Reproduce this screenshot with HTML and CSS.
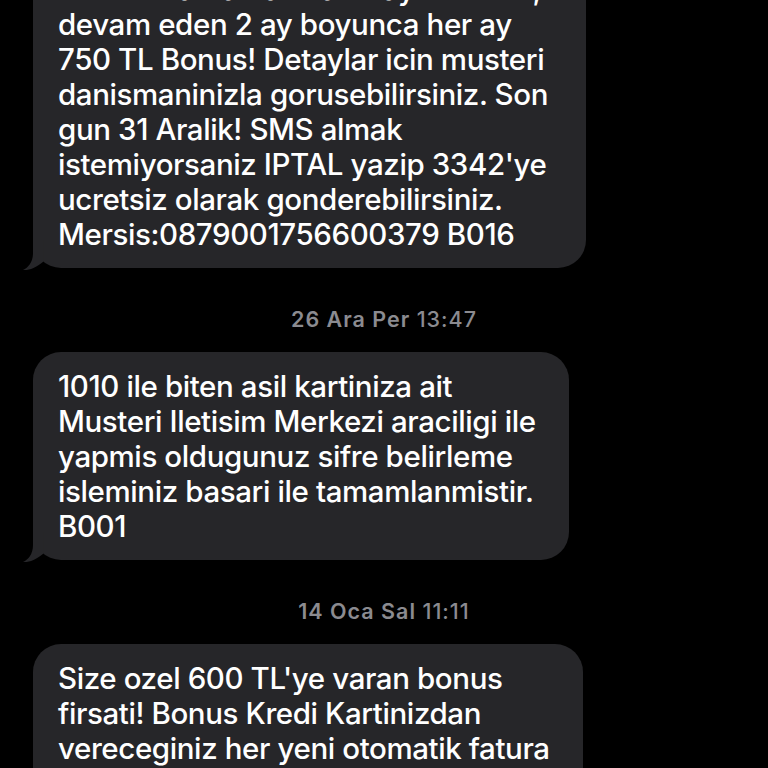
FILE: index.html
```html
<!DOCTYPE html>
<html lang="tr">
<head>
<meta charset="utf-8">
<title>Mesajlar</title>
<link rel="stylesheet" href="styles.css">
</head>
<body>
<main class="thread">
  <div class="bubble wide">
    <p class="text">750 TL harcamaniza ilk ay 1000 TL,<br>devam eden 2 ay boyunca her ay<br>750 TL Bonus! Detaylar icin musteri<br>danismaninizla gorusebilirsiniz. Son<br>gun 31 Aralik! SMS almak<br>istemiyorsaniz IPTAL yazip 3342'ye<br>ucretsiz olarak gonderebilirsiniz.<br>Mersis:0879001756600379 B016</p>
    <svg class="tail" viewBox="0 0 20 30" width="20" height="30" aria-hidden="true"><path d="M10 0 L10 13 C10 22 5.5 27.5 0 30 C6 30.6 13 27.5 20.5 21.4 L20.5 0 Z"/></svg>
  </div>

  <div class="stamp"><span class="day">26 Ara Per</span> <span class="time">13:47</span></div>

  <div class="bubble">
    <p class="text">1010 ile biten asil kartiniza ait<br>Musteri Iletisim Merkezi araciligi ile<br>yapmis oldugunuz sifre belirleme<br>isleminiz basari ile tamamlanmistir.<br>B001</p>
    <svg class="tail" viewBox="0 0 20 30" width="20" height="30" aria-hidden="true"><path d="M10 0 L10 13 C10 22 5.5 27.5 0 30 C6 30.6 13 27.5 20.5 21.4 L20.5 0 Z"/></svg>
  </div>

  <div class="stamp"><span class="day">14 Oca Sal</span> <span class="time">11:11</span></div>

  <div class="bubble">
    <p class="text">Size ozel 600 TL'ye varan bonus<br>firsati! Bonus Kredi Kartinizdan<br>vereceginiz her yeni otomatik fatura<br>talimatina 200 TL Bonus!</p>
  </div>
</main>
</body>
</html>
```

FILE: styles.css
```css
html, body {
  margin: 0;
  padding: 0;
  background: #000;
  height: 100%;
  overflow: hidden;
}

.thread {
  display: flex;
  flex-direction: column;
  align-items: flex-start;
  padding: 0 0 0 33px;
  margin-top: -45px;
  font-family: "Inter", "Liberation Sans", sans-serif;
}

.bubble {
  position: relative;
  background: #262629;
  border-radius: 28px;
  padding: 17px 33px 16px 25px;
  color: #fff;
}

.bubble.wide {
  padding-right: 38px;
}

.text {
  margin: 0;
  font-size: 29.5px;
  line-height: 35px;
  font-weight: 500;
  white-space: nowrap;
  letter-spacing: -0.4px;
}

.tail {
  position: absolute;
  left: -10px;
  bottom: -2px;
  overflow: visible;
  fill: #262629;
}

.stamp {
  align-self: stretch;
  margin: 39px 0 21px -33px;
  height: 24px;
  line-height: 24px;
  text-align: center;
  color: #8b8b90;
  font-size: 21.5px;
  font-weight: 600;
  letter-spacing: 1px;
}

.stamp .time {
  font-weight: 500;
}
```
